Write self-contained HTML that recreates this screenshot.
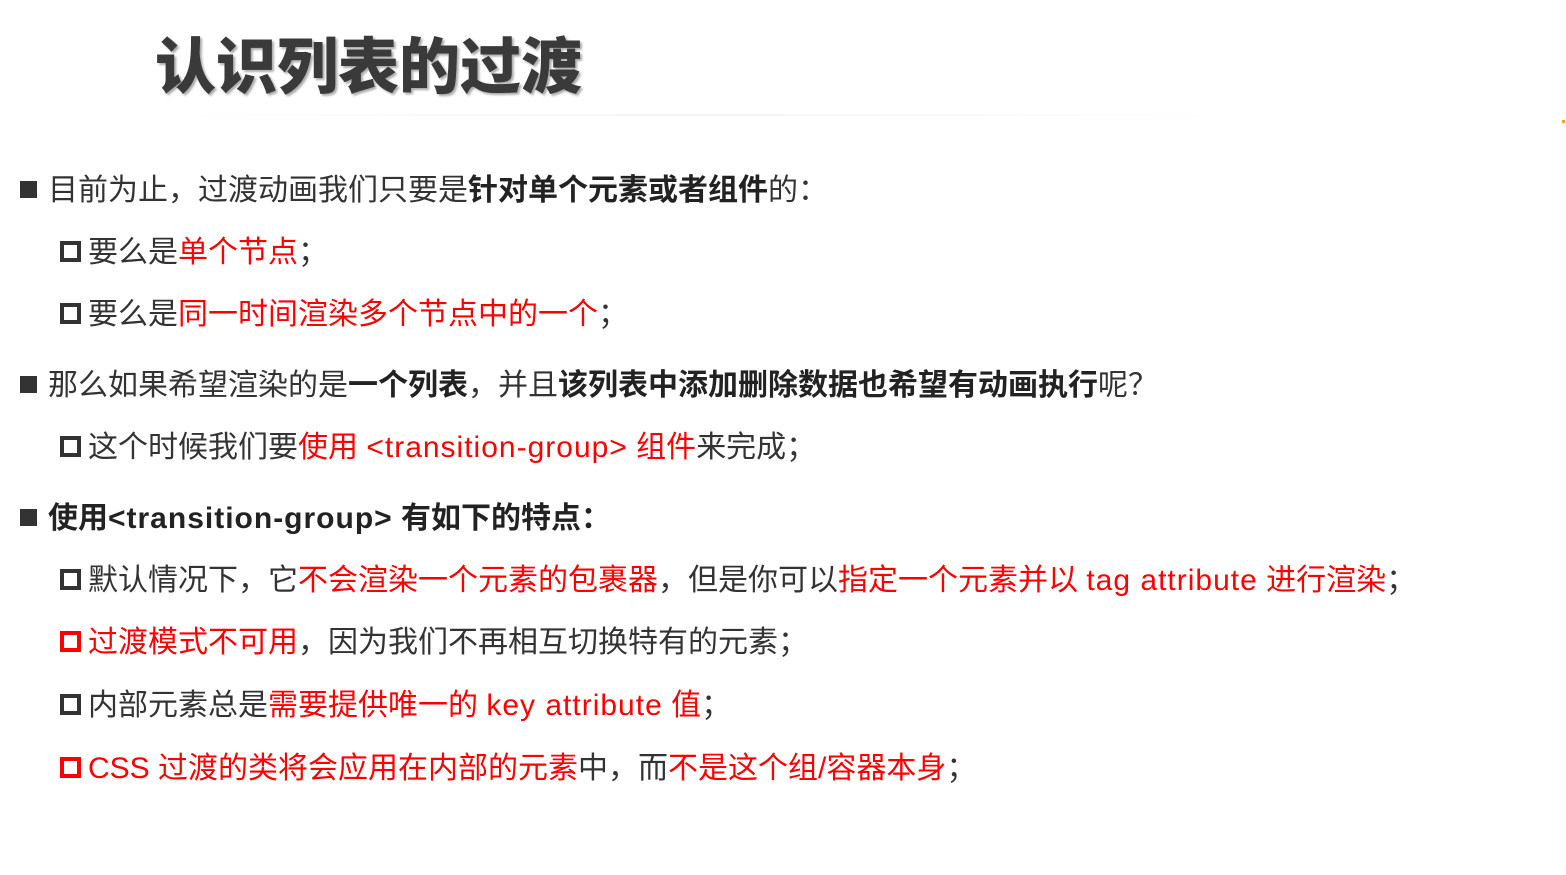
<!DOCTYPE html>
<html><head><meta charset="utf-8"><style>
body{margin:0;width:1566px;height:875px;background:#fff;position:relative;overflow:hidden;font-family:"Liberation Sans","Noto Sans CJK SC",sans-serif;color:#333}
.t{position:absolute;left:155px;top:24px;font-size:61px;font-weight:900;color:#3a3a3a;letter-spacing:0px;line-height:86px;text-shadow:2px 2px 2px #aaa}
.l{position:absolute;line-height:40px;font-size:30px;white-space:nowrap;color:#333}
.r{color:#f00}
.b{font-weight:bold;color:#222}
.e{letter-spacing:1px}
.fs{position:absolute;left:20px;width:17px;height:17px;background:#333}
.hs{position:absolute;left:60px;width:13px;height:13px;border:4px solid #333}
.hs.red{border-color:#f00}
</style></head><body>
<div class="t">认识列表的过渡</div>
<div style="position:absolute;left:100px;top:114px;width:1200px;height:2px;background:linear-gradient(90deg,#fff,#f3f6f4,#fff)"></div>
<div style="position:absolute;left:1562px;top:120px;width:3px;height:3px;background:#f0a030"></div>

<div class="fs" style="top:181px"></div>
<div class="l" style="left:48px;top:171px">目前为止，过渡动画我们只要是<span class="b">针对单个元素或者组件</span>的：</div>
<div class="hs" style="top:241px"></div>
<div class="l" style="left:88px;top:233px">要么是<span class="r">单个节点</span>；</div>
<div class="hs" style="top:303px"></div>
<div class="l" style="left:88px;top:295px">要么是<span class="r">同一时间渲染多个节点中的一个</span>；</div>

<div class="fs" style="top:376px"></div>
<div class="l" style="left:48px;top:366px">那么如果希望渲染的是<span class="b">一个列表</span>，并且<span class="b">该列表中添加删除数据也希望有动画执行</span>呢？</div>
<div class="hs" style="top:436px"></div>
<div class="l" style="left:88px;top:428px">这个时候我们要<span class="r">使用 <span class="e">&lt;transition-group&gt;</span> 组件</span>来完成；</div>

<div class="fs" style="top:509px"></div>
<div class="l b" style="left:48px;top:499px">使用<span class="e">&lt;transition-group&gt;</span> 有如下的特点：</div>
<div class="hs" style="top:569px"></div>
<div class="l" style="left:88px;top:561px">默认情况下，它<span class="r">不会渲染一个元素的包裹器</span>，但是你可以<span class="r">指定一个元素并以 <span class="e">tag attribute</span> 进行渲染</span>；</div>
<div class="hs red" style="top:631px"></div>
<div class="l" style="left:88px;top:623px"><span class="r">过渡模式不可用</span>，因为我们不再相互切换特有的元素；</div>
<div class="hs" style="top:694px"></div>
<div class="l" style="left:88px;top:686px">内部元素总是<span class="r">需要提供唯一的 <span class="e">key attribute</span> 值</span>；</div>
<div class="hs red" style="top:757px"></div>
<div class="l" style="left:88px;top:749px"><span class="r">CSS 过渡的类将会应用在内部的元素</span>中，而<span class="r">不是这个组/容器本身</span>；</div>
</body></html>
